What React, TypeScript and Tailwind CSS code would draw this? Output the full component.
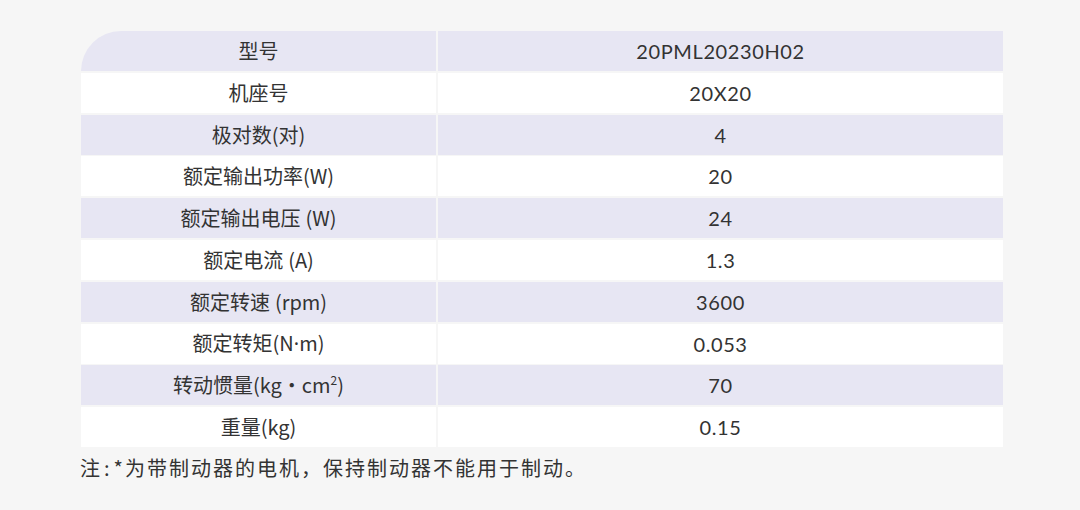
import React from "react";

const latin = { fontFamily: '"Noto Sans", sans-serif' };

const rows: [React.ReactNode, string][] = [
  ["型号", "20PML20230H02"],
  ["机座号", "20X20"],
  ["极对数(对)", "4"],
  ["额定输出功率(W)", "20"],
  [
    <>
      额定输出电压<span className="ml-[5px]">(W)</span>
    </>,
    "24",
  ],
  [
    <>
      额定电流<span className="ml-[5px]">(A)</span>
    </>,
    "1.3",
  ],
  [
    <>
      额定转速<span className="ml-[5px]">(rpm)</span>
    </>,
    "3600",
  ],
  [
    <>
      额定转矩(N<span style={latin}>·</span>m)
    </>,
    "0.053",
  ],
  [
    <>
      转动惯量(kg·cm<sup className="text-[12px] -top-[0.7em]">2</sup>)
    </>,
    "70",
  ],
  ["重量(kg)", "0.15"],
];

export default function App() {
  return (
    <div
      className="w-[1080px] h-[510px] bg-[#f6f6f6] pt-[31px] pl-[81px] text-[#333333]"
      style={{ fontFamily: '"Noto Sans CJK SC", "Noto Sans", sans-serif' }}
    >
      <div className="w-[922px] flex flex-col gap-y-[1.8px]">
        {rows.map(([label, value], i) => {
          const bg = i % 2 === 0 ? "bg-[#e7e6f3]" : "bg-white";
          return (
            <div key={i} className="flex gap-x-[2px] h-[40px]">
              <div
                className={`w-[355px] flex items-center justify-center text-[20px] ${bg} ${
                  i === 0 ? "rounded-tl-[40px]" : ""
                }`}
              >
                <span>{label}</span>
              </div>
              <div
                className={`flex-1 flex items-center justify-center text-[20px] tracking-[0.6px] ${bg}`}
                style={{ fontFamily: 'Lato, "Noto Sans", sans-serif' }}
              >
                {value}
              </div>
            </div>
          );
        })}
      </div>
      <p className="mt-[6px] -ml-[1px] text-[20px] tracking-[2px]">
        注<span className="ml-[2px] mr-[2px]">:</span>*为带制动器的电机，保持制动器不能用于制动。
      </p>
    </div>
  );
}
